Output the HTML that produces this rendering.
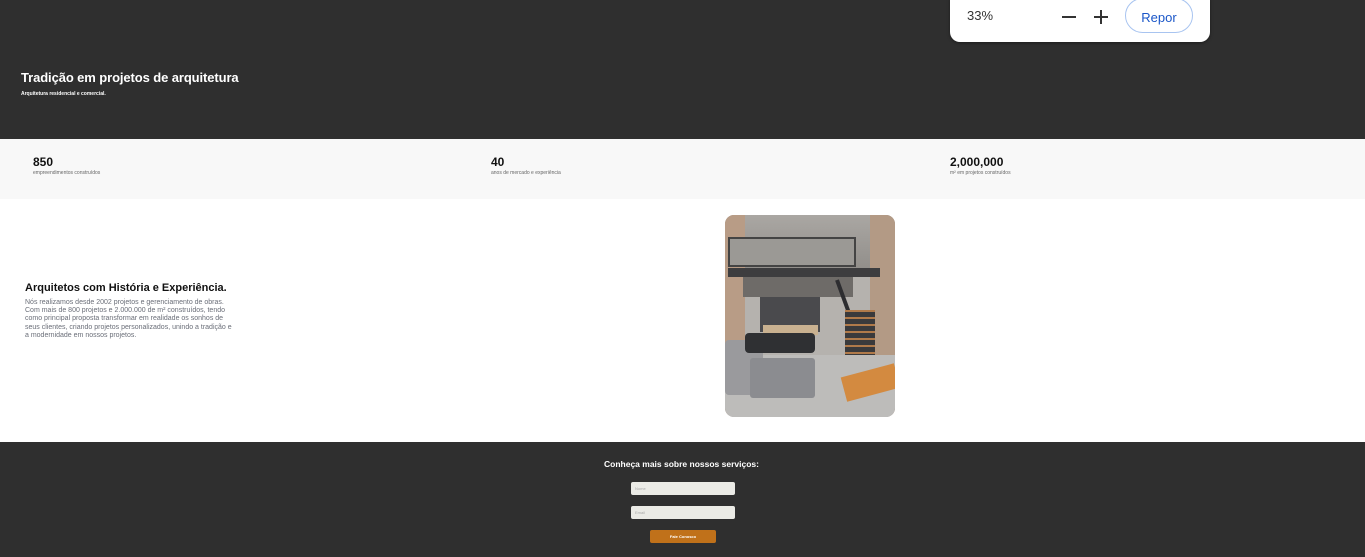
<!DOCTYPE html>
<html><head><meta charset="utf-8"><style>
*{margin:0;padding:0;box-sizing:border-box}
body{width:1365px;height:557px;overflow:hidden;font-family:"Liberation Sans",sans-serif;background:#fff;position:relative}
.hero{position:absolute;left:0;top:0;width:1365px;height:139px;background:#2f2f2f}
.hero h1{position:absolute;left:21px;top:70px;color:#fff;font-size:13px;font-weight:bold;letter-spacing:-0.1px}
.hero p{position:absolute;left:21px;top:91px;color:#fff;font-size:5px;font-weight:bold}
.stats{position:absolute;top:139px;left:0;width:1365px;height:60px;background:#f8f8f8}
.stat{position:absolute;top:16px}
.stat b{display:block;font-size:12px;color:#111}
.stat span{display:block;font-size:5px;color:#666;margin-top:1px}
.about h2{position:absolute;left:25px;top:282px;font-size:11px;color:#111}
.about p{position:absolute;left:25px;top:299px;width:210px;font-size:7px;line-height:8.2px;color:#6a6e78}
.img{position:absolute;left:725px;top:215px;width:170px;height:202px;border-radius:9px;overflow:hidden;background:#b5b2ae}
.foot{position:absolute;left:0;top:442px;width:1365px;height:115px;background:#2f2f2f}
.foot h3{position:absolute;top:17px;width:100%;text-align:center;color:#fff;font-size:8.5px;font-weight:bold;left:-1px}
.in{position:absolute;left:631px;width:104px;height:13px;background:#ebebe6;border-radius:2px;font-size:4px;color:#aaa;padding:4px 4px}
.btn{position:absolute;left:650px;top:88px;width:66px;height:13px;background:#c0711a;border-radius:2px;color:#fff;font-size:4px;font-weight:bold;text-align:center;line-height:13px}
.zoom{position:absolute;left:950px;top:-10px;width:260px;height:52px;background:#fff;border-radius:10px;box-shadow:0 1px 3px rgba(0,0,0,.4)}
.zoom .p{position:absolute;left:17px;top:18px;font-size:13px;color:#333}
.zoom .m{position:absolute;left:112px;top:26px;width:14px;height:2px;background:#333}
.zoom .pl1{position:absolute;left:144px;top:26px;width:14px;height:2px;background:#333}
.zoom .pl2{position:absolute;left:150px;top:20px;width:2px;height:14px;background:#333}
.zoom .r{position:absolute;left:175px;top:8px;width:68px;height:35px;border:1px solid #a8c4f0;border-radius:18px;color:#1a56c8;font-size:13px;text-align:center;line-height:33px;padding-top:2px}
</style></head><body>
<div class="hero"><h1>Tradição em projetos de arquitetura</h1><p>Arquitetura residencial e comercial.</p></div>
<div class="zoom"><span class="p">33%</span><i class="m"></i><i class="pl1"></i><i class="pl2"></i><div class="r">Repor</div></div>
<div class="stats">
<div class="stat" style="left:33px"><b>850</b><span>empreendimentos construídos</span></div>
<div class="stat" style="left:491px"><b>40</b><span>anos de mercado e experiência</span></div>
<div class="stat" style="left:950px"><b>2,000,000</b><span>m² em projetos construídos</span></div>
</div>
<div class="about"><h2>Arquitetos com História e Experiência.</h2>
<p>Nós realizamos desde 2002 projetos e gerenciamento de obras. Com mais de 800 projetos e 2.000.000 de m² construídos, tendo como principal proposta transformar em realidade os sonhos de seus clientes, criando projetos personalizados, unindo a tradição e a modernidade em nossos projetos.</p></div>
<div class="img">
<div style="position:absolute;left:0;top:0;width:170px;height:60px;background:linear-gradient(#aaa7a3,#8f8c88)"></div>
<div style="position:absolute;left:0;top:0;width:20px;height:200px;background:#b89c86"></div>
<div style="position:absolute;left:145px;top:0;width:25px;height:200px;background:#b39a85"></div>
<div style="position:absolute;left:3px;top:22px;width:128px;height:30px;border:2px solid #444;background:#9b9995"></div>
<div style="position:absolute;left:3px;top:53px;width:152px;height:9px;background:#3d3d3f"></div>
<div style="position:absolute;left:18px;top:62px;width:110px;height:20px;background:#6e6b68"></div>
<div style="position:absolute;left:35px;top:82px;width:60px;height:35px;background:#4a4a4d"></div>
<div style="position:absolute;left:38px;top:110px;width:55px;height:10px;background:#c9b190"></div>
<div style="position:absolute;left:110px;top:65px;width:4px;height:90px;background:#2d2d30;transform:rotate(-20deg);transform-origin:top"></div>
<div style="position:absolute;left:120px;top:95px;width:30px;height:55px;background:repeating-linear-gradient(#b07a4a 0 2px,#3a3a3c 2px 7px)"></div>
<div style="position:absolute;left:0;top:140px;width:170px;height:62px;background:#bdbcba"></div>
<div style="position:absolute;left:0;top:125px;width:38px;height:55px;background:#9a9a9d;border-radius:4px"></div>
<div style="position:absolute;left:25px;top:143px;width:65px;height:40px;background:#8b8c90;border-radius:3px"></div>
<div style="position:absolute;left:118px;top:155px;width:55px;height:25px;background:#d38a40;transform:rotate(-15deg)"></div>
<div style="position:absolute;left:20px;top:118px;width:70px;height:20px;background:#2f3033;border-radius:4px"></div>
</div>
<div class="foot"><h3>Conheça mais sobre nossos serviços:</h3>
<div class="in" style="top:40px">Nome</div>
<div class="in" style="top:64px">Email</div>
<div class="btn">Fale Conosco</div></div>
</body></html>
